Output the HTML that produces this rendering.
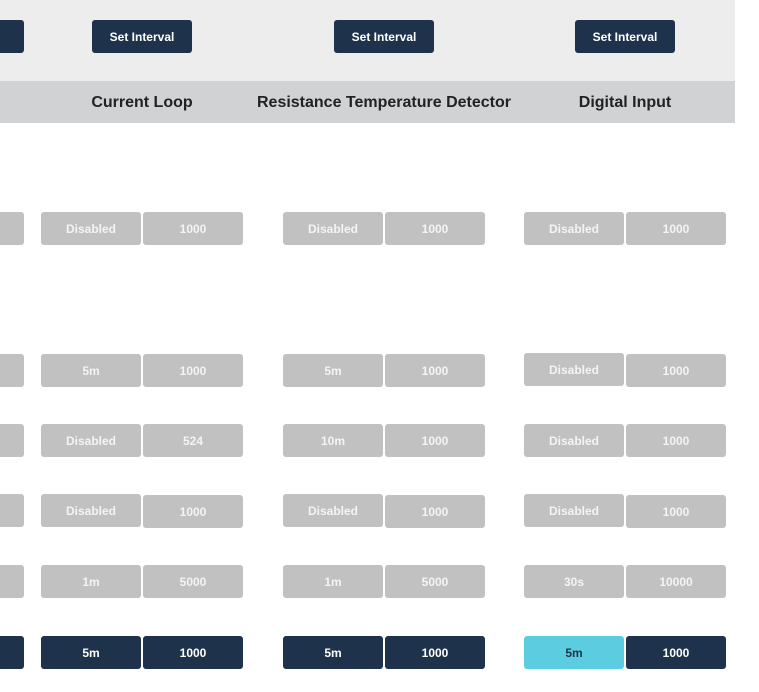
<!DOCTYPE html><html><head><style>
body{margin:0;width:759px;height:692px;position:relative;background:#fff;font-family:"Liberation Sans",sans-serif;overflow:hidden}
.top{position:absolute;left:0;top:0;width:735px;height:81px;background:#ededed}
.hdr{position:absolute;left:0;top:81px;width:735px;height:42px;background:#d1d2d4}
.h{position:absolute;top:82px;height:42px;line-height:42px;font-weight:bold;font-size:16px;color:#222;text-align:center;width:300px}
.b{position:absolute;height:33px;line-height:35px;border-radius:3px;text-align:center;font-size:12px;color:#f4f4f4;background:#c1c1c1;width:100px;font-weight:bold}
.d{background:#1f324b;color:#fff}
.c{background:#5ccde0;color:#1f324b}
</style></head><body>
<div class="top"></div><div class="hdr"></div>
<div class="b d" style="left:-76px;top:20px"></div>
<div class="b d" style="left:92px;top:20px">Set Interval</div>
<div class="b d" style="left:334px;top:20px">Set Interval</div>
<div class="b d" style="left:575px;top:20px">Set Interval</div>
<div class="h" style="left:-8px">Current Loop</div>
<div class="h" style="left:234px">Resistance Temperature Detector</div>
<div class="h" style="left:475px">Digital Input</div>
<div class="b" style="left:-76px;top:212px"></div>
<div class="b" style="left:41px;top:212px">Disabled</div><div class="b" style="left:143px;top:212px">1000</div>
<div class="b" style="left:283px;top:212px">Disabled</div><div class="b" style="left:385px;top:212px">1000</div>
<div class="b" style="left:524px;top:212px">Disabled</div><div class="b" style="left:626px;top:212px">1000</div>

<div class="b" style="left:-76px;top:354px"></div>
<div class="b" style="left:41px;top:354px">5m</div><div class="b" style="left:143px;top:354px">1000</div>
<div class="b" style="left:283px;top:354px">5m</div><div class="b" style="left:385px;top:354px">1000</div>
<div class="b" style="left:524px;top:353px">Disabled</div><div class="b" style="left:626px;top:354px">1000</div>

<div class="b" style="left:-76px;top:424px"></div>
<div class="b" style="left:41px;top:424px">Disabled</div><div class="b" style="left:143px;top:424px">524</div>
<div class="b" style="left:283px;top:424px">10m</div><div class="b" style="left:385px;top:424px">1000</div>
<div class="b" style="left:524px;top:424px">Disabled</div><div class="b" style="left:626px;top:424px">1000</div>

<div class="b" style="left:-76px;top:494px"></div>
<div class="b" style="left:41px;top:494px">Disabled</div><div class="b" style="left:143px;top:495px">1000</div>
<div class="b" style="left:283px;top:494px">Disabled</div><div class="b" style="left:385px;top:495px">1000</div>
<div class="b" style="left:524px;top:494px">Disabled</div><div class="b" style="left:626px;top:495px">1000</div>

<div class="b" style="left:-76px;top:565px"></div>
<div class="b" style="left:41px;top:565px">1m</div><div class="b" style="left:143px;top:565px">5000</div>
<div class="b" style="left:283px;top:565px">1m</div><div class="b" style="left:385px;top:565px">5000</div>
<div class="b" style="left:524px;top:565px">30s</div><div class="b" style="left:626px;top:565px">10000</div>

<div class="b d" style="left:-76px;top:636px"></div>
<div class="b d" style="left:41px;top:636px">5m</div><div class="b d" style="left:143px;top:636px">1000</div>
<div class="b d" style="left:283px;top:636px">5m</div><div class="b d" style="left:385px;top:636px">1000</div>
<div class="b c" style="left:524px;top:636px">5m</div><div class="b d" style="left:626px;top:636px">1000</div>
</body></html>
